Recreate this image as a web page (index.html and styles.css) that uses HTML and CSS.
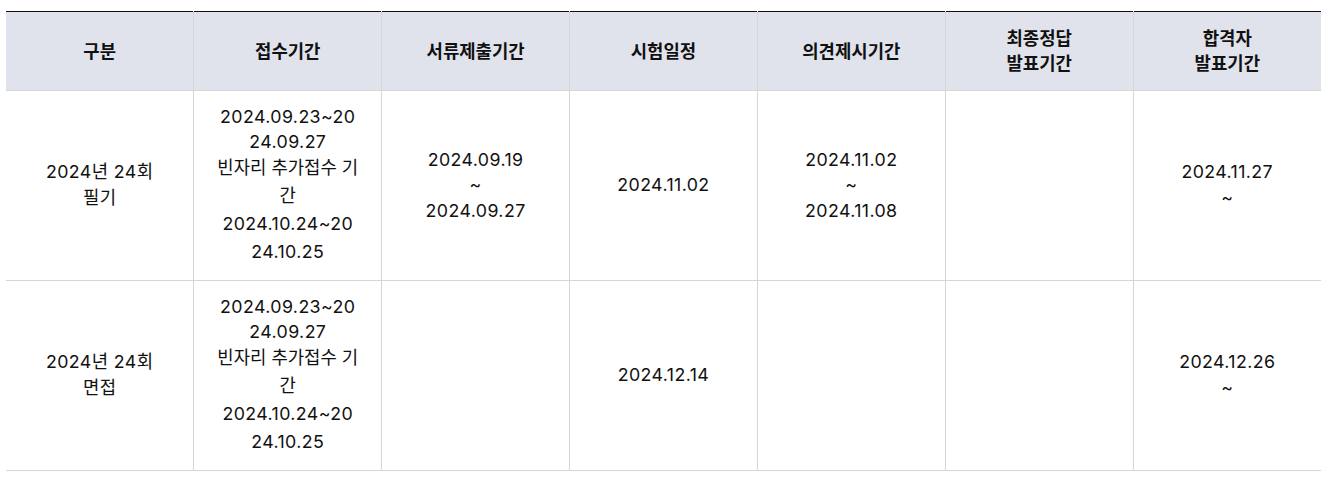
FILE: index.html
```html
<!DOCTYPE html>
<html lang="ko">
<head>
<meta charset="utf-8">
<link rel="stylesheet" href="styles.css">
</head>
<body>
<div class="wrap">
<table class="sched">
  <thead>
    <tr>
      <th>구분</th>
      <th>접수기간</th>
      <th>서류제출기간</th>
      <th>시험일정</th>
      <th>의견제시기간</th>
      <th>최종정답<br>발표기간</th>
      <th>합격자<br>발표기간</th>
    </tr>
  </thead>
  <tbody>
    <tr>
      <td>2024년 24회<br>필기</td>
      <td><div class="p1">2024.09.23~20<br>24.09.27</div><div class="p2"><span class="ko">빈자리 추가접수 기<br>간</span><br>2024.10.24~20<br>24.10.25</div></td>
      <td>2024.09.19<br>~<br>2024.09.27</td>
      <td>2024.11.02</td>
      <td>2024.11.02<br>~<br>2024.11.08</td>
      <td></td>
      <td>2024.11.27<br>~</td>
    </tr>
    <tr>
      <td>2024년 24회<br>면접</td>
      <td><div class="p1">2024.09.23~20<br>24.09.27</div><div class="p2"><span class="ko">빈자리 추가접수 기<br>간</span><br>2024.10.24~20<br>24.10.25</div></td>
      <td></td>
      <td>2024.12.14</td>
      <td></td>
      <td></td>
      <td>2024.12.26<br>~</td>
    </tr>
  </tbody>
</table>
</div>
</body>
</html>
```
FILE: styles.css
```css
html, body {
  margin: 0;
  padding: 0;
  background: #fff;
}
.wrap {
  padding: 11px 18px 0 6px;
}
.sched {
  width: 1315px;
  table-layout: fixed;
  border-collapse: collapse;
  border-top: 1px solid #111;
  font-family: Inter, "Noto Sans CJK KR", sans-serif;
  font-size: 17.8px;
  color: #111;
}
.sched th,
.sched td {
  text-align: center;
  vertical-align: middle;
  border-left: 1px solid #d6d6d6;
  border-bottom: 1px solid #d6d6d6;
  white-space: nowrap;
}
.sched th:first-child,
.sched td:first-child {
  border-left: none;
}
.sched th {
  background: #e1e3ec;
  font-weight: 700;
  line-height: 25px;
  padding: 14px 10px;
}
.sched td {
  font-weight: 400;
  line-height: 25.6px;
  letter-spacing: 0.4px;
  padding: 13px 10px 14px;
}
.sched .p1 {
  line-height: 25px;
}
.sched .p2 {
  line-height: 28px;
}
.sched .ko {
  letter-spacing: 0;
}
```
